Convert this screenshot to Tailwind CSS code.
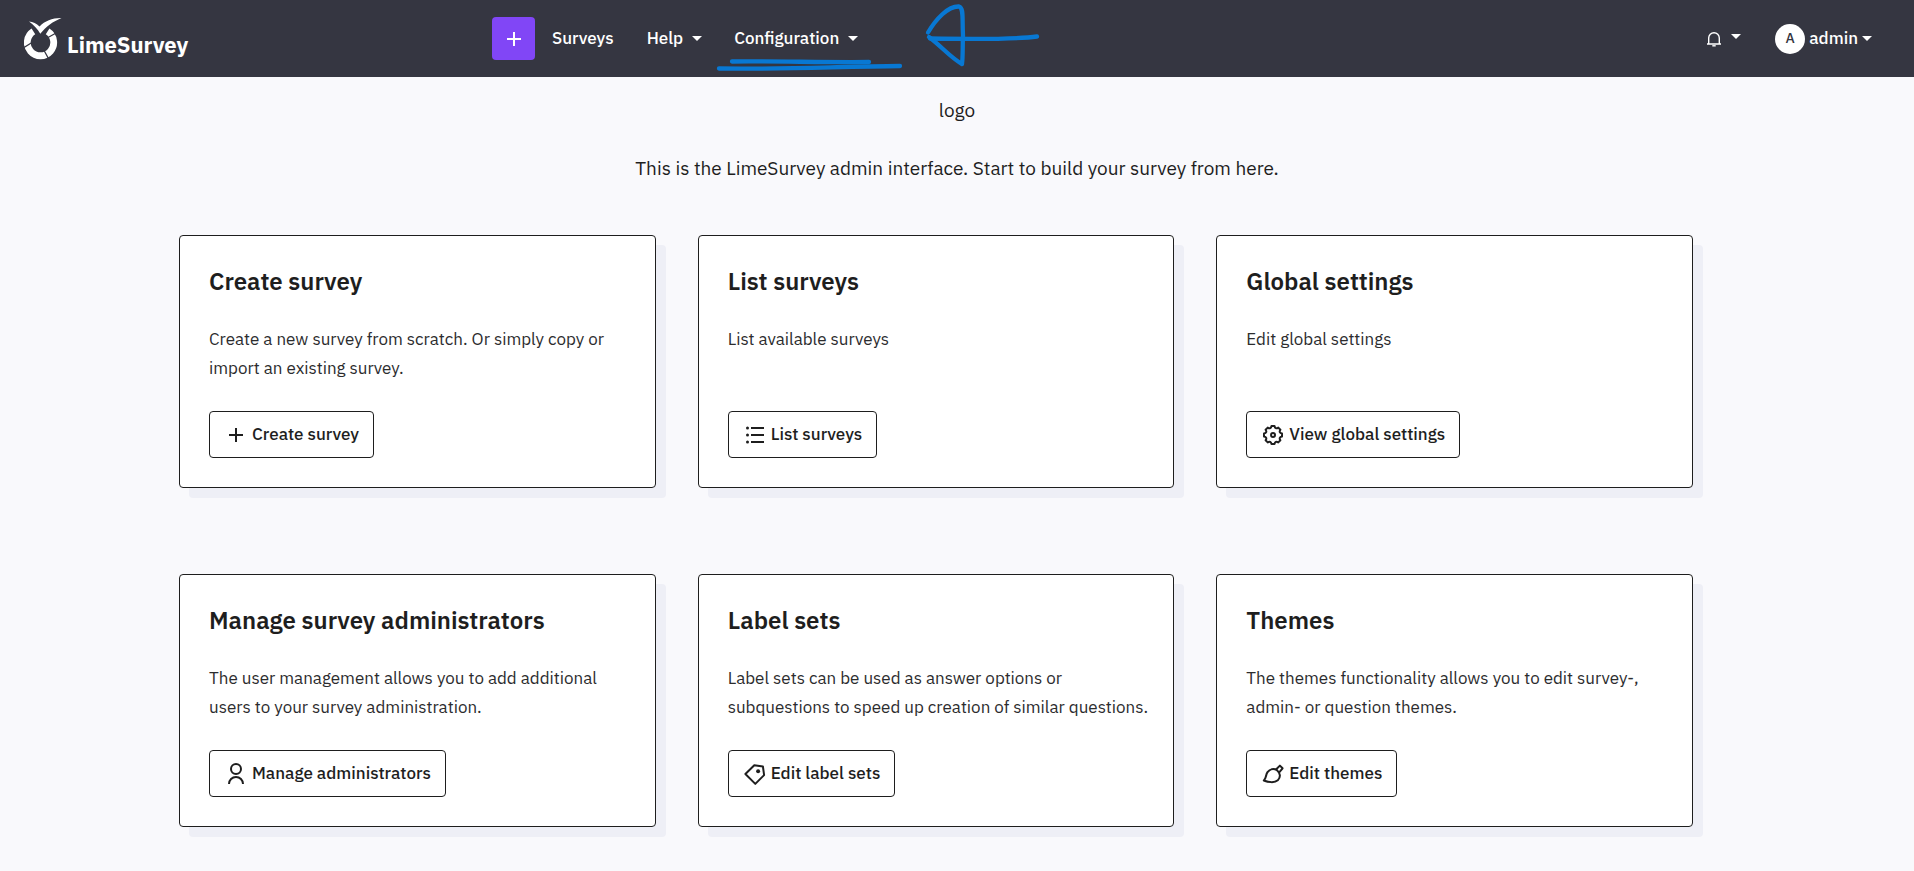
<!DOCTYPE html>
<html lang="en">
<head>
<meta charset="utf-8">
<meta name="viewport" content="width=device-width, initial-scale=1">
<title>LimeSurvey</title>
<script src="https://cdn.jsdelivr.net/npm/@tailwindcss/browser@4"></script>
</head>
<body class="min-h-screen bg-[#f9f9fc] font-['IBM_Plex_Sans',Roboto,sans-serif] text-[17px] text-[#1e1e1e]">

<header class="relative flex h-[77px] items-center bg-[#353641] pr-[42px] pl-6 font-medium text-white">
  <a href="#" class="flex w-[468px] shrink-0 items-center gap-[5px]">
    <svg class="h-[43px] w-[38px]" viewBox="0 0 38 43" aria-hidden="true">
      <path d="M9.4 14.4A13.2 13.2 0 1 0 23.6 14.4" fill="none" stroke="#fff" stroke-width="6.8"/>
      <path d="M0 30.500L8 25.500M24 20.500L33 15.500M19.500 32.500L25 42.500" stroke="#353641" stroke-width="1.300"/>
      <path d="M5 4.500C9 5 12.500 6.500 15.500 9.500C21 3.800 28.500 .8 37.500 1C29 4.500 22 9.500 16.300 16.800C13.500 12 10 8 5 4.500Z" fill="#fff"/>
    </svg>
    <span class="pt-3 text-[22px] leading-7 font-bold">LimeSurvey</span>
  </a>

  <nav class="flex items-center" aria-label="Main">
    <button type="button" aria-label="Create" class="mr-[17px] flex size-[43px] items-center justify-center rounded bg-[#8146f6]">
      <svg class="size-6" viewBox="0 0 24 24" fill="none" stroke="currentColor" stroke-width="2"><path d="M12 5V19M5 12H19"/></svg>
    </button>
    <a href="#" class="mr-[33px]">Surveys</a>
    <button type="button" class="mr-8 flex items-center gap-[9px]">Help
      <svg class="h-[5px] w-[10px]" viewBox="0 0 10 5" fill="currentColor"><path d="M0 0H10L5 5Z"/></svg>
    </button>
    <button type="button" class="flex items-center gap-[9px]">Configuration
      <svg class="h-[5px] w-[10px]" viewBox="0 0 10 5" fill="currentColor"><path d="M0 0H10L5 5Z"/></svg>
    </button>
  </nav>

  <div class="ml-auto flex items-center gap-[34px]">
    <button type="button" aria-label="Notifications" class="flex items-center gap-[9px]">
      <svg class="size-4" viewBox="0 0 16 16" fill="none" stroke="currentColor" stroke-width="1.400"><path d="M1 13H15M2.700 13V7A5.300 5.300 0 0 1 13.300 7V13"/><path d="M6.300 14.800H9.700"/></svg>
      <svg class="mb-1 h-[5px] w-[10px]" viewBox="0 0 10 5" fill="currentColor"><path d="M0 0H10L5 5Z"/></svg>
    </button>
    <button type="button" class="flex items-center gap-1">
      <span class="flex size-[30px] items-center justify-center rounded-full bg-white text-[14px] text-[#353641]">A</span>admin
      <svg class="h-[5px] w-[10px]" viewBox="0 0 10 5" fill="currentColor"><path d="M0 0H10L5 5Z"/></svg>
    </button>
  </div>

  <!-- Hand-drawn pen marks over the menu -->
  <svg class="pointer-events-none absolute top-0 left-[712px] h-[77px] w-[336px]" viewBox="712 0 336 77" fill="none" stroke="#0878d3" stroke-width="4.300" stroke-linecap="round" stroke-linejoin="round" aria-hidden="true">
    <path d="M732 61.500C775 61 825 62.500 869 62"/>
    <path d="M719 68.500C780 69.500 840 66.500 900 66"/>
    <path d="M928 32.500C936 19 948 6 959 6.500C964 8 962 18 963 35C962.500 48 963 56 962 64C951 58 941 46 929 37"/>
    <path d="M930 38.500C960 39 1015 39.500 1037 36.500"/>
  </svg>
</header>

<main>
  <div class="flex flex-col items-center gap-[30px] pt-[19px] text-center text-[19px] leading-7">
    <p>logo</p>
    <p>This is the LimeSurvey admin interface. Start to build your survey from here.</p>
  </div>

  <div class="grid grid-cols-3 gap-x-[42px] gap-y-[86px] pt-[53px] pr-[221px] pb-10 pl-[179px]">
    <section class="flex flex-col items-start rounded border border-[#1e1e1e] bg-white py-[29px] pr-6 pl-[29px] shadow-[10px_10px_0_#eeeff6]">
      <h2 class="mb-7 text-[24px] leading-8 font-semibold">Create survey</h2>
      <p class="mb-7 min-h-[58px] leading-[29px] text-[#2c2c2e]">Create a new survey from scratch. Or simply copy or import an existing survey.</p>
      <a href="#" class="flex h-[47px] items-center gap-1 rounded border border-[#1e1e1e] px-[14px] font-medium">
        <svg class="size-6" viewBox="0 0 24 24" fill="currentColor"><path d="M11 11V5H13V11H19V13H13V19H11V13H5V11H11Z"/></svg>Create survey</a>
    </section>

    <section class="flex flex-col items-start rounded border border-[#1e1e1e] bg-white py-[29px] pr-6 pl-[29px] shadow-[10px_10px_0_#eeeff6]">
      <h2 class="mb-7 text-[24px] leading-8 font-semibold">List surveys</h2>
      <p class="mb-7 min-h-[58px] leading-[29px] text-[#2c2c2e]">List available surveys</p>
      <a href="#" class="flex h-[47px] items-center gap-1 rounded border border-[#1e1e1e] px-[14px] font-medium">
        <svg class="size-6" viewBox="0 0 24 24" fill="currentColor"><path d="M8 4H21V6H8ZM8 11H21V13H8ZM8 18H21V20H8Z"/><circle cx="4.500" cy="5" r="1.500"/><circle cx="4.500" cy="12" r="1.500"/><circle cx="4.500" cy="19" r="1.500"/></svg>List surveys</a>
    </section>

    <section class="flex flex-col items-start rounded border border-[#1e1e1e] bg-white py-[29px] pr-6 pl-[29px] shadow-[10px_10px_0_#eeeff6]">
      <h2 class="mb-7 text-[24px] leading-8 font-semibold">Global settings</h2>
      <p class="mb-7 min-h-[58px] leading-[29px] text-[#2c2c2e]">Edit global settings</p>
      <a href="#" class="flex h-[47px] items-center gap-1 rounded border border-[#1e1e1e] px-[14px] font-medium">
        <svg class="size-6" viewBox="-12 -12 24 24" fill="none" stroke="currentColor" stroke-width="2" stroke-linejoin="round"><path d="M-1.500 -9L1.500 -9Q2.200 -5.400 5.300 -7.400L7.400 -5.300Q5.400 -2.200 9 -1.500L9 1.500Q5.400 2.200 7.400 5.300L5.300 7.400Q2.200 5.400 1.500 9L-1.500 9Q-2.200 5.400 -5.300 7.400L-7.400 5.300Q-5.400 2.200 -9 1.500L-9 -1.500Q-5.400 -2.200 -7.400 -5.300L-5.300 -7.400Q-2.200 -5.400 -1.500 -9Z"/><circle r="2"/></svg>View global settings</a>
    </section>

    <section class="flex flex-col items-start rounded border border-[#1e1e1e] bg-white py-[29px] pr-6 pl-[29px] shadow-[10px_10px_0_#eeeff6]">
      <h2 class="mb-7 text-[24px] leading-8 font-semibold">Manage survey administrators</h2>
      <p class="mb-7 min-h-[58px] leading-[29px] text-[#2c2c2e]">The user management allows you to add additional users to your survey administration.</p>
      <a href="#" class="flex h-[47px] items-center gap-1 rounded border border-[#1e1e1e] px-[14px] font-medium">
        <svg class="size-6" viewBox="0 0 24 24" fill="none" stroke="currentColor" stroke-width="2"><circle cx="12" cy="7" r="5"/><path d="M5 22A7 7 0 0 1 19 22"/></svg>Manage administrators</a>
    </section>

    <section class="flex flex-col items-start rounded border border-[#1e1e1e] bg-white py-[29px] pr-6 pl-[29px] shadow-[10px_10px_0_#eeeff6]">
      <h2 class="mb-7 text-[24px] leading-8 font-semibold">Label sets</h2>
      <p class="mb-7 min-h-[58px] leading-[29px] text-[#2c2c2e]">Label sets can be used as answer options or subquestions to speed up creation of similar questions.</p>
      <a href="#" class="flex h-[47px] items-center gap-1 rounded border border-[#1e1e1e] px-[14px] font-medium">
        <svg class="size-6" viewBox="0 0 24 24" fill="none" stroke="currentColor" stroke-width="2" stroke-linejoin="round"><path d="M11.300 3.200L19.900 4.400L21.100 13.100L12.300 21.900L2.400 12Z"/><circle cx="15.100" cy="9.200" r="2" fill="currentColor" stroke="none"/></svg>Edit label sets</a>
    </section>

    <section class="flex flex-col items-start rounded border border-[#1e1e1e] bg-white py-[29px] pr-6 pl-[29px] shadow-[10px_10px_0_#eeeff6]">
      <h2 class="mb-7 text-[24px] leading-8 font-semibold">Themes</h2>
      <p class="mb-7 min-h-[58px] leading-[29px] text-[#2c2c2e]">The themes functionality allows you to edit survey-, admin- or question themes.</p>
      <a href="#" class="flex h-[47px] items-center gap-1 rounded border border-[#1e1e1e] px-[14px] font-medium">
        <svg class="size-6" viewBox="0 0 24 24" fill="none" stroke="currentColor" stroke-width="2" stroke-linejoin="round"><path d="M2.800 18.500C5.300 16.500 4.500 13 6.500 10.200C9 6.800 13 6.300 16 8.200C19.300 11 20 15 16.800 18.300C13.500 21.200 7 20.200 2.800 18.500Z"/><path d="M15 7.500L18.900 3.600L21.600 6.300L18 10.600"/></svg>Edit themes</a>
    </section>
  </div>
</main>
</body>
</html>
